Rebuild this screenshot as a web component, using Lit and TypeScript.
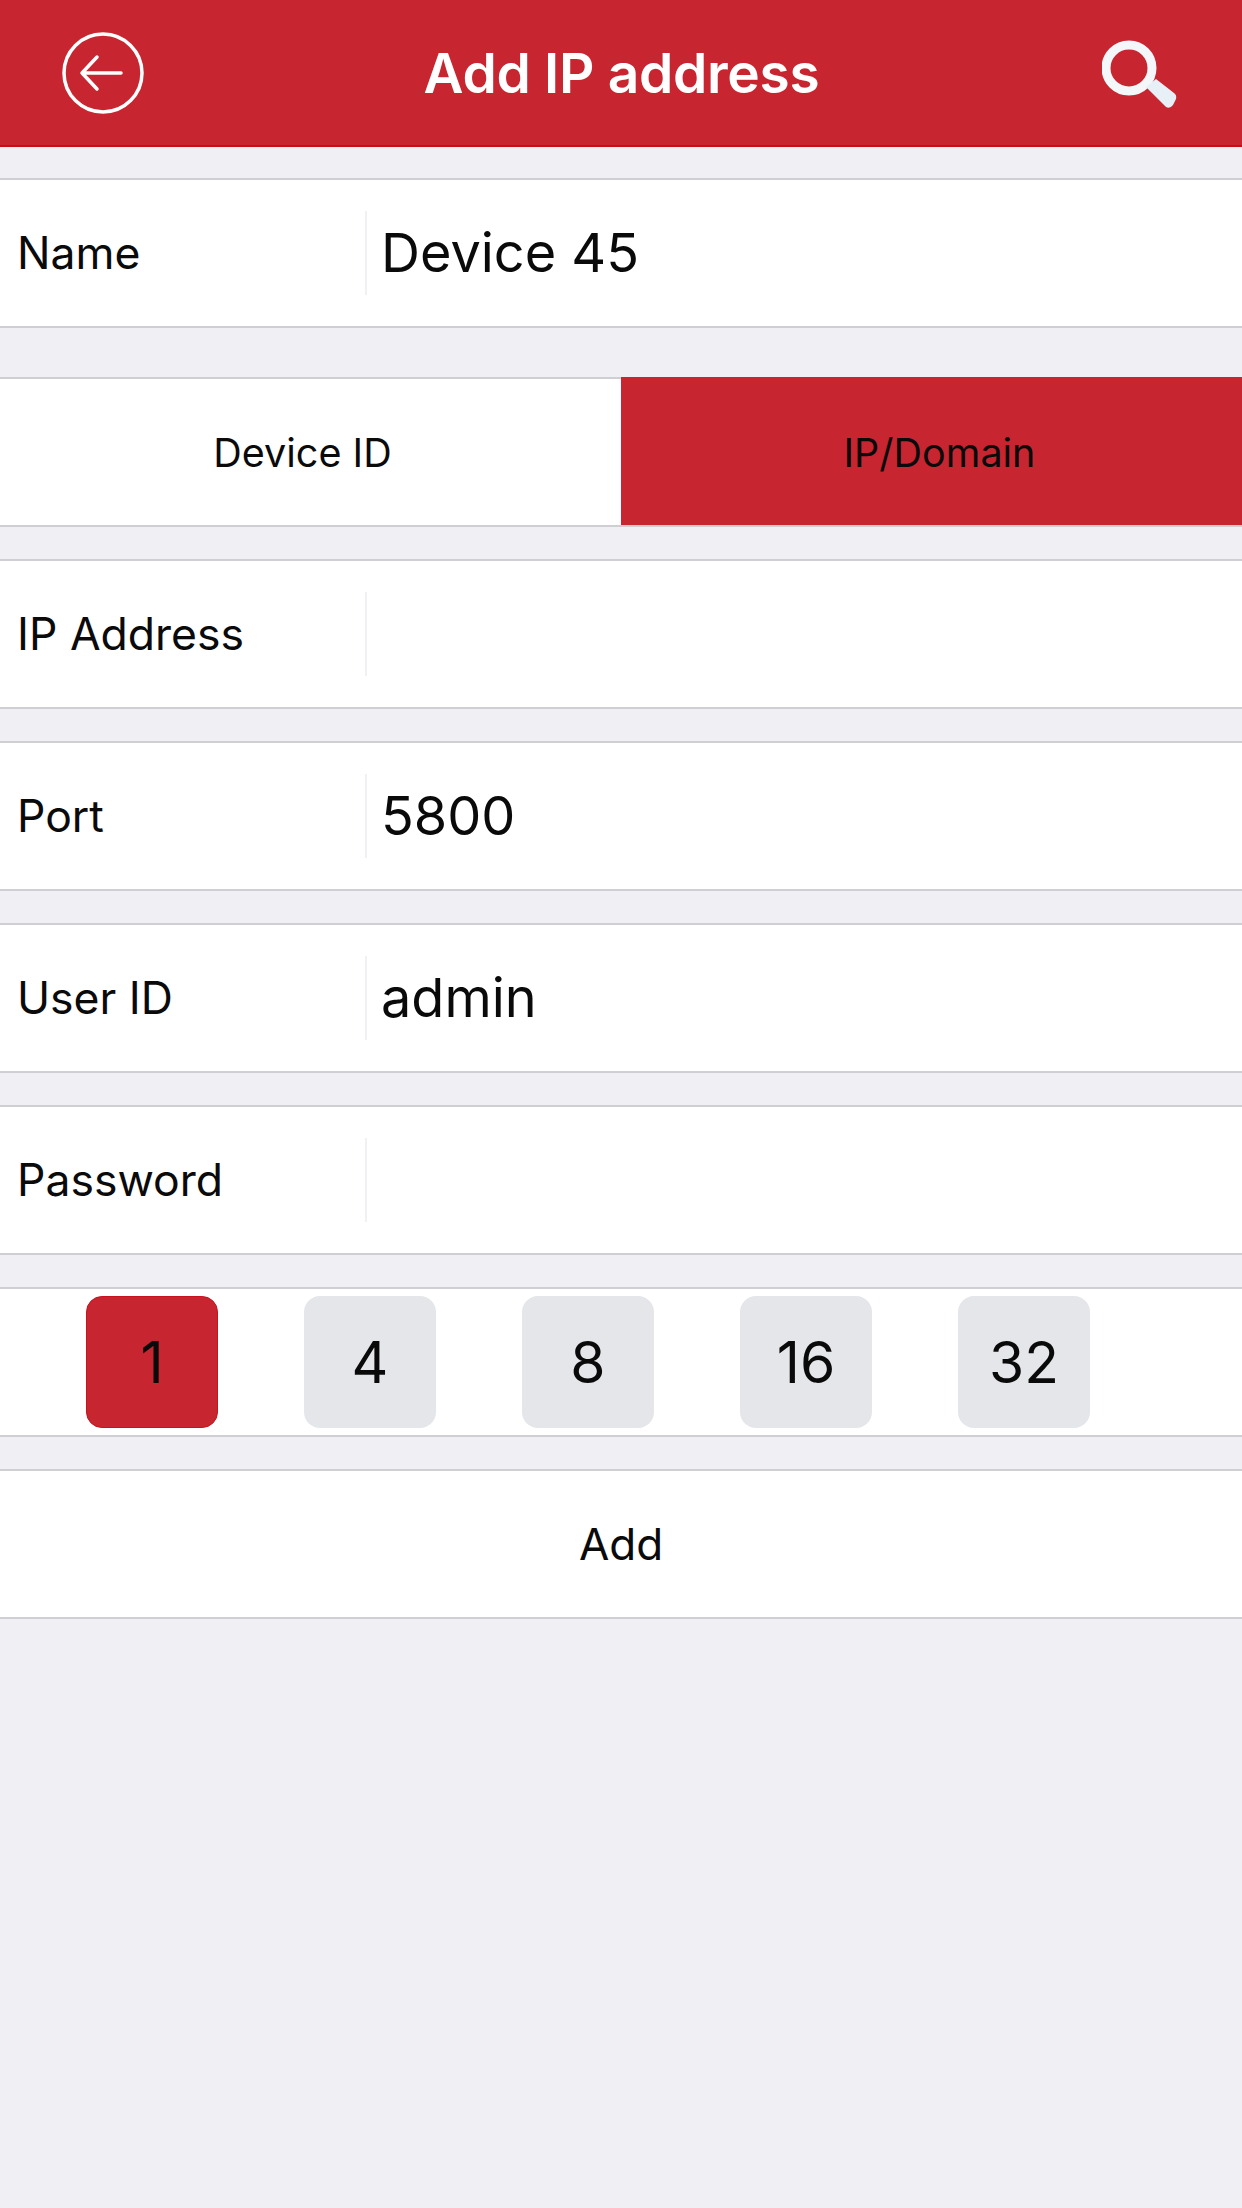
import { LitElement, html, css } from 'lit';
import { customElement } from 'lit/decorators.js';

const FONT_STACK = css`Inter, "Liberation Sans", sans-serif`;

@customElement('app-root')
export class AppRoot extends LitElement {
  static styles = css`
    :host {
      display: block;
      min-height: 2208px;
      background: #efeff4;
      color: #0a0a0a;
      font-family: ${FONT_STACK};
    }

    .header {
      height: 147px;
      background: #c72530;
      border-bottom: 2px solid #c5101c;
      box-sizing: border-box;
      display: grid;
      grid-template-columns: 1fr auto 1fr;
      align-items: center;
      padding: 0 65px 0 62px;
      color: #fff;
    }

    .header h1 {
      margin: 0 0 0 4px;
      font-size: 55px;
      font-weight: 600;
      letter-spacing: -0.3px;
    }

    .back { display: block; width: 82px; height: 82px; }
    .search { display: block; width: 75px; height: 72px; justify-self: end; }

    .rows {
      display: flex;
      flex-direction: column;
      padding-top: 31px;
    }

    .row {
      height: 150px;
      box-sizing: border-box;
      background: #fff;
      border-top: 2px solid #cfcfd3;
      border-bottom: 2px solid #cfcfd3;
      margin-bottom: 32px;
      display: flex;
      align-items: center;
    }

    .row.first { margin-bottom: 49px; }

    .label {
      width: 367px;
      height: 84px;
      box-sizing: border-box;
      padding-left: 17px;
      display: flex;
      align-items: center;
      border-right: 2px solid #f1f1f3;
      font-size: 44.5px;
      flex: none;
    }

    .value {
      padding: 0 0 2px 14px;
      font-size: 54px;
    }

    .tabs { padding: 0; align-items: stretch; }

    .tab {
      flex: 1;
      display: flex;
      align-items: center;
      justify-content: center;
      font-size: 39.5px;
      padding: 2px 16px 0 0;
    }

    .tab.active {
      background: #c72530;
      margin-top: -2px;
      padding: 4px 0 0 16px;
    }

    .counts {
      padding-left: 86px;
      gap: 86px;
    }

    .count {
      width: 132px;
      height: 132px;
      box-sizing: border-box;
      border-radius: 16px;
      background: #e5e6ea;
      display: flex;
      align-items: center;
      justify-content: center;
      font-size: 57px;
    }

    .count.active {
      background: #c72530;
      border: 1px solid #c8121e;
    }

    .add {
      justify-content: center;
      font-size: 44px;
    }
  `;

  private field(label: string, value = '', first = false) {
    return html`
      <div class="row ${first ? 'first' : ''}">
        <div class="label">${label}</div>
        <div class="value">${value}</div>
      </div>
    `;
  }

  render() {
    return html`
      <div class="header">
        <svg class="back" viewBox="0 0 82 82" fill="none" stroke="#fff" stroke-width="3.5" stroke-linecap="round" stroke-linejoin="round">
          <circle cx="41" cy="41" r="39"/>
          <path d="M20 41H59M35 25L20 41L35 57"/>
        </svg>
        <h1>Add IP address</h1>
        <svg class="search" viewBox="0 0 75 72">
          <circle cx="27" cy="31" r="23" fill="none" stroke="#f4f7f9" stroke-width="9"/>
          <path d="M44 50L54 42L72 56Q75 58 74 62L71 68Q68 72 64 70Z" fill="#e6f0f6"/>
        </svg>
      </div>

      <div class="rows">
        ${this.field('Name', 'Device 45', true)}
        <div class="row tabs">
          <div class="tab">Device ID</div>
          <div class="tab active">IP/Domain</div>
        </div>
        ${this.field('IP Address')}
        ${this.field('Port', '5800')}
        ${this.field('User ID', 'admin')}
        ${this.field('Password')}
        <div class="row counts">
          ${['1', '4', '8', '16', '32'].map(
            (n, i) => html`<div class="count ${i === 0 ? 'active' : ''}">${n}</div>`
          )}
        </div>
        <div class="row add">Add</div>
      </div>
    `;
  }
}
